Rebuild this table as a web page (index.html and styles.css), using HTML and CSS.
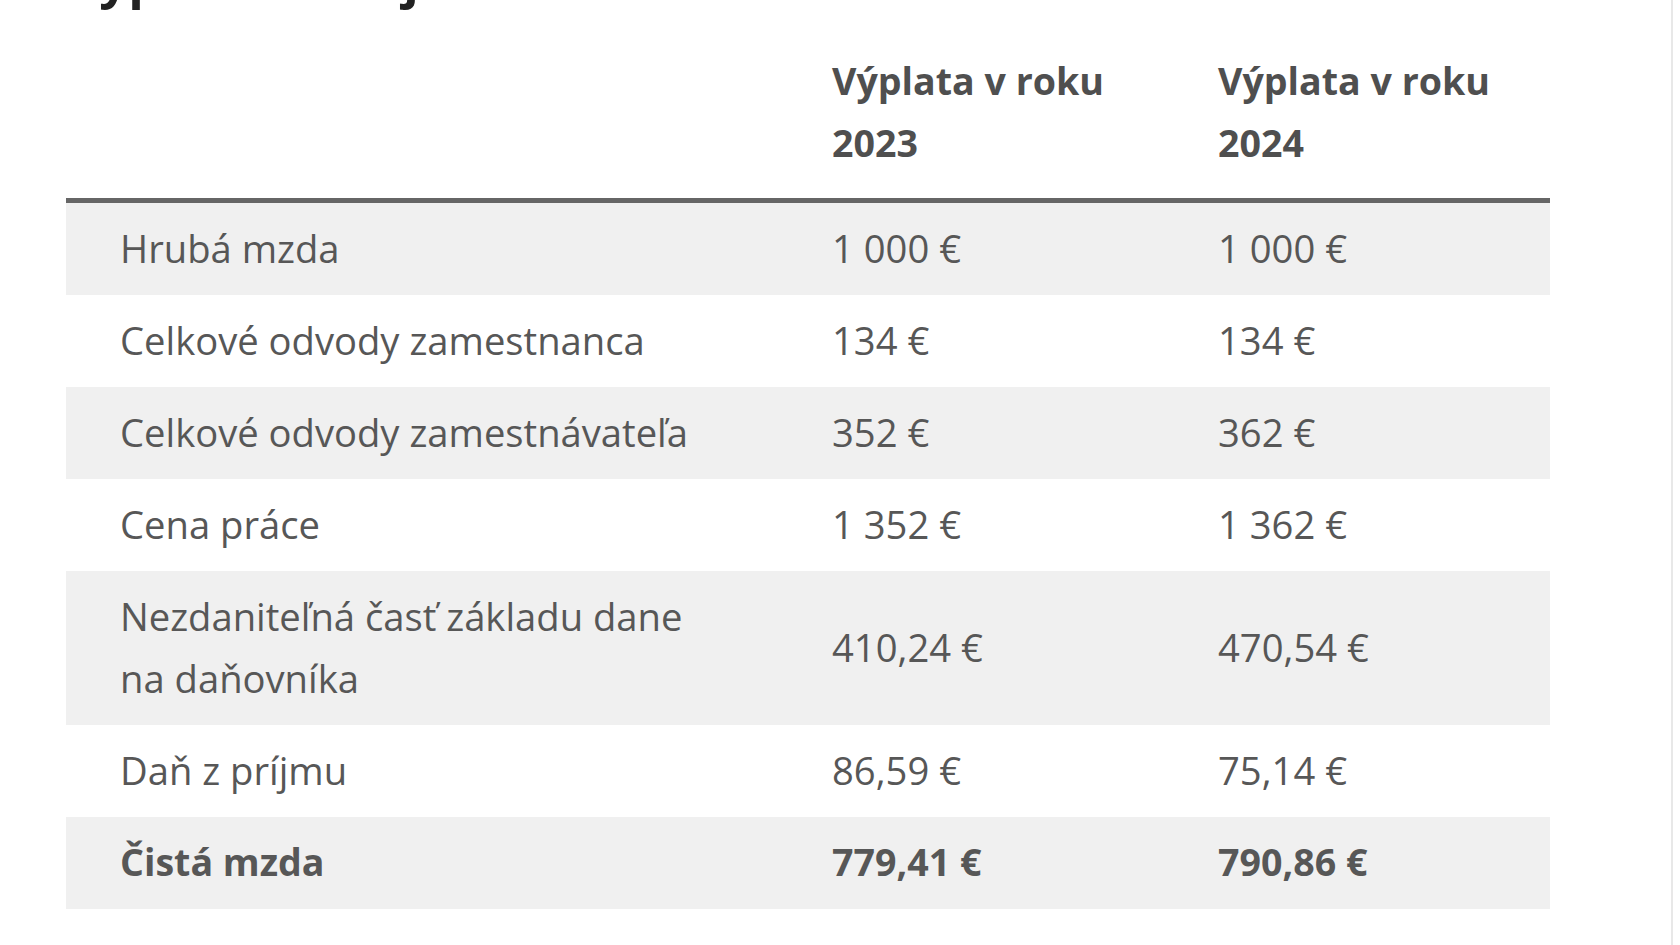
FILE: index.html
```html
<!DOCTYPE html>
<html lang="sk">
<head>
<meta charset="utf-8">
<title>Výpočet čistej mzdy</title>
<link rel="stylesheet" href="styles.css">
</head>
<body>
<div class="page">
  <h2 class="title">Výpočet čistej mzda od 1. 1. 2024</h2>
  <table class="wage">
    <thead>
      <tr>
        <th class="c1"></th>
        <th class="c2">Výplata v roku 2023</th>
        <th class="c3">Výplata v roku 2024</th>
      </tr>
    </thead>
    <tbody>
      <tr><td class="c1">Hrubá mzda</td><td class="c2">1 000 €</td><td class="c3">1 000 €</td></tr>
      <tr><td class="c1">Celkové odvody zamestnanca</td><td class="c2">134 €</td><td class="c3">134 €</td></tr>
      <tr><td class="c1">Celkové odvody zamestnávateľa</td><td class="c2">352 €</td><td class="c3">362 €</td></tr>
      <tr><td class="c1">Cena práce</td><td class="c2">1 352 €</td><td class="c3">1 362 €</td></tr>
      <tr><td class="c1">Nezdaniteľná časť základu dane na daňovníka</td><td class="c2">410,24 €</td><td class="c3">470,54 €</td></tr>
      <tr><td class="c1">Daň z príjmu</td><td class="c2">86,59 €</td><td class="c3">75,14 €</td></tr>
      <tr class="total"><td class="c1">Čistá mzda</td><td class="c2">779,41 €</td><td class="c3">790,86 €</td></tr>
    </tbody>
  </table>
</div>
</body>
</html>
```

FILE: styles.css
```css
html, body {
  margin: 0;
  padding: 0;
  background: #ffffff;
}

body {
  font-family: "Open Sans", "Noto Sans", sans-serif;
  overflow: hidden;
}

.page {
  width: 1605px;
  height: 945px;
  padding-left: 66px;
  border-right: 2px solid #e8e8e8;
  overflow: hidden;
}

.title {
  margin: -52px 0 0 0;
  font-size: 51px;
  line-height: 61px;
  font-weight: 700;
  color: #222222;
  white-space: nowrap;
}

.wage {
  border-collapse: separate;
  border-spacing: 0;
  width: 1484px;
  table-layout: fixed;
  font-size: 38.2px;
  line-height: 62px;
  color: #575757;
}

.wage th {
  text-align: left;
  vertical-align: top;
  font-size: 37.6px;
  font-weight: 700;
  color: #4f4f4f;
  padding: 41px 55px 24px 55px;
  border-bottom: 5px solid #666666;
}

.wage td {
  padding: 14px 55px 16px 55px;
  vertical-align: middle;
}

.wage .c1 {
  width: 604px;
  padding-left: 54px;
  padding-right: 53px;
}

.wage .c2 {
  width: 276px;
}

.wage tbody tr:nth-child(odd) td {
  background: #f0f0f0;
}

.wage tr.total td {
  font-weight: 700;
  font-size: 37.6px;
}
```
